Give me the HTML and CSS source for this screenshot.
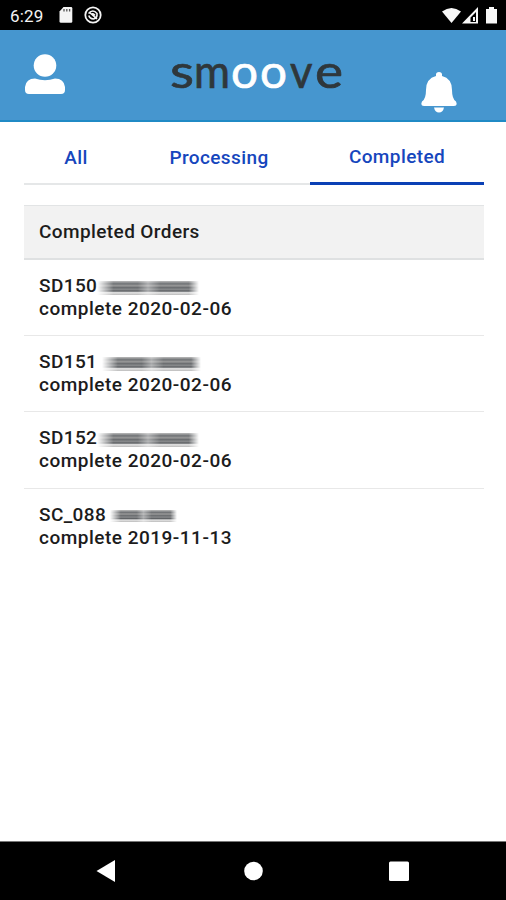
FILE: index.html
```html
<!DOCTYPE html>
<html lang="en">
<head>
<meta charset="utf-8">
<title>Completed Orders</title>
<link rel="stylesheet" href="styles.css">
</head>
<body>
<div class="status">
  <span class="time">6:29</span>
  <svg class="card-icon" width="14" height="16" viewBox="0 0 14 16"><path fill="#f4f4f4" d="M4.500 0H12q1.300 0 1.300 1.300V14.500q0 1.300-1.300 1.300H2Q.5 15.800.5 14.500V4.500z"/><path d="M5 2v2.500M7.800 2v2.500M10.600 2v2.500" stroke="#555" stroke-width="1.300"/></svg>
  <svg class="sync-icon" width="18" height="18" viewBox="0 0 18 18" fill="none" stroke="#f4f4f4"><circle cx="9" cy="9" r="7.700" stroke-width="1.800"/><path d="M4.500 7.500Q9 2.500 13 7.500Q13.500 12 9.500 13Q5.500 12.500 4.800 9.500M5 6l8 7M7 8.500q2-2 4 1" stroke-width="1.600"/></svg>
  <svg class="signals" width="56" height="18" viewBox="0 0 56 18" fill="#f8f8f8"><path d="M0 4.500Q9.500-2.500 19 4.500L9.500 16z"/><path fill-rule="evenodd" d="M20 16.500L36 0v16.500zM28.500 10.500V15H34V5z"/><path d="M31 10h2v4h-2z"/><path d="M44 2h3V0h5v2h3v14.500H44z"/></svg>
</div>
<header class="header">
  <svg class="user" width="40" height="40" viewBox="0 0 40 40" fill="#fff"><circle cx="20" cy="11.500" r="11.300"/><path d="M0 36V33Q1 24.500 10 24.500Q20 28 30 24.500Q39 24.500 40 33V36Q40 40 36 40H4Q0 40 0 36z"/></svg>
  <svg class="logo" width="180" height="64" viewBox="0 0 180 64"><text y="46"><tspan x="1" textLength="24" lengthAdjust="spacingAndGlyphs">s</tspan><tspan x="25" textLength="36" lengthAdjust="spacingAndGlyphs">m</tspan><tspan class="light" x="62" textLength="27" lengthAdjust="spacingAndGlyphs">o</tspan><tspan class="light" x="91" textLength="27" lengthAdjust="spacingAndGlyphs">o</tspan><tspan x="121" textLength="22.500" lengthAdjust="spacingAndGlyphs">v</tspan><tspan x="146" textLength="28" lengthAdjust="spacingAndGlyphs">e</tspan></text></svg>
  <svg class="bell" width="36" height="41" viewBox="0 0 36 41" fill="#fff"><path d="M15 4V2.500Q15 0 18 0T21 2.500V4Q31 6.500 31 18Q31 27 35 29.500Q37 34 33 34H3Q-1 34 1 29.500Q5 27 5 18Q5 6.500 15 4zM13 35.500H23Q22 40.500 18 40.500T13 35.500z"/></svg>
</header>
<main class="main">
  <nav class="tabs">
    <a class="tab all">All</a>
    <a class="tab processing">Processing</a>
    <a class="tab completed">Completed</a>
  </nav>
  <section class="orders">
    <h1>Completed Orders</h1>
    <div class="order"><p>SD150<i class="smear"></i></p><p class="state">complete 2020-02-06</p></div>
    <div class="order"><p>SD151<i class="smear gap"></i></p><p class="state">complete 2020-02-06</p></div>
    <div class="order"><p>SD152<i class="smear"></i></p><p class="state">complete 2020-02-06</p></div>
    <div class="order"><p>SC_088<i class="smear short"></i></p><p class="state">complete 2019-11-13</p></div>
  </section>
</main>
<footer class="nav">
  <svg width="506" height="58" viewBox="0 0 506 58" fill="#fff"><path d="M96.500 29L115 18v22z"/><circle cx="253.500" cy="29" r="9.300"/><rect x="389" y="19.500" width="20" height="19.500" rx="1.500"/></svg>
</footer>
</body>
</html>
```

FILE: styles.css
```css
* { box-sizing: border-box; }
body {
  margin: 0;
  height: 900px;
  display: flex;
  flex-direction: column;
  background: #fff;
  color: #1c1c1c;
  font: 500 19px/23px Roboto, sans-serif;
  overflow: hidden;
}
svg { display: block; flex: none; }
p, h1 { margin: 0; font: inherit; }
.status {
  height: 30px;
  flex: none;
  display: flex;
  align-items: flex-start;
  padding: 7px 8px 0 10px;
  background: #000;
  color: #f4f4f4;
}
.time { width: 49px; font-size: 17px; line-height: 19px; font-weight: 400; letter-spacing: .2px; }
.sync-icon { margin: -1px 0 0 11px; }
.signals { margin-left: auto; }
.header {
  height: 92px;
  flex: none;
  display: flex;
  align-items: flex-start;
  padding: 24px 49px 0 25px;
  background: #4696cf;
  border-bottom: 2px solid #208ac5;
}
.logo { margin: -12px 0 0 104px; overflow: visible; }
.logo text { font: 400 47px Lato, sans-serif; fill: #2f373b; stroke: #2f373b; stroke-width: .7px; }
.logo .light { fill: #fff; stroke: #fff; }
.bell { margin: 18px 0 0 auto; }
.main { flex: 1; padding: 0 22px 0 24px; }
.tabs {
  height: 63px;
  display: grid;
  grid-template-columns: 104px 182px 174px;
  grid-template-rows: 63px;
  box-shadow: inset 0 -2px #e5e7e8;
  color: #1646bd;
}
.tab { text-align: center; line-height: 71px; letter-spacing: .4px; }
.completed { border-bottom: 3px solid #0b40b5; line-height: 69px; }
.orders { margin-top: 20px; letter-spacing: .4px; }
h1 {
  height: 55px;
  padding-left: 15px;
  line-height: 51px;
  background: #f2f2f2;
  border-top: 1px solid #e2e4e5;
  border-bottom: 2px solid #dfe1e2;
}
.order { height: 76.200px; padding: 14px 15px 0; border-bottom: 1px solid #e8e8e8; }
.order:last-child { border: 0; }
.order p { height: 23px; display: flex; align-items: center; white-space: nowrap; }
.order .state { letter-spacing: .5px; }
.smear {
  width: 102px;
  height: 14px;
  margin: 5px 0 0 0;
  background: linear-gradient(#bbb, #6f7275 20%, #999 34%, #66696c 48%, #8b8d8f 59%, #5c5f62 72%, #e5e5e5 83%, #bbb);
  -webkit-mask-image: linear-gradient(90deg, transparent, #000 16%, #000 40%, #0009 50%, #000 62%, #000 90%, transparent);
  filter: blur(.7px);
}
.gap { margin-left: 5px; width: 99px; }
.short { width: 67px; height: 12px; margin: 4px 0 0 4px; }
.nav { height: 59px; flex: none; background: #000; border-top: 1px solid #777; }
```
